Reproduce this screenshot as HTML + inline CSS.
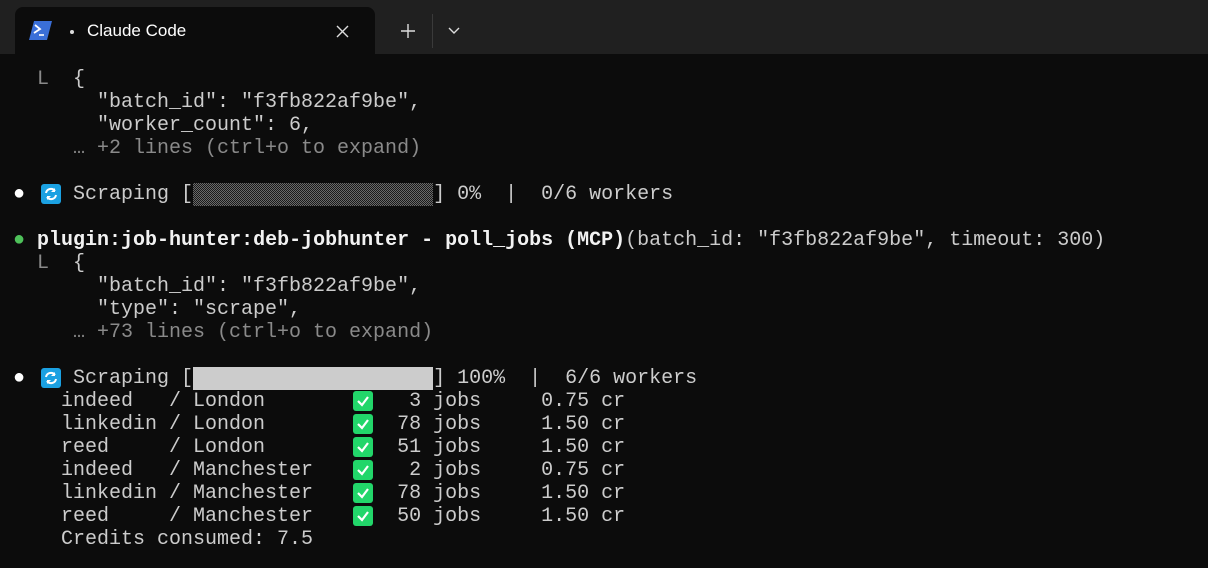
<!DOCTYPE html>
<html><head><meta charset="utf-8"><style>
*{margin:0;padding:0;box-sizing:border-box}
body{width:1208px;height:568px;background:#0c0c0c;overflow:hidden;position:relative;font-family:"Liberation Mono",monospace;font-size:20px;color:#cccccc}
.bar{position:absolute;left:0;top:0;width:1208px;height:54px;background:#202020}
.tab{position:absolute;left:15px;top:7px;width:360px;height:47px;background:#0c0c0c;border-radius:8px 8px 0 0}
.tt{position:absolute;left:87px;top:21px;font-family:"Liberation Sans",sans-serif;font-size:17px;color:#fff}
.l{position:absolute;left:13px;height:23px;line-height:23px;white-space:pre}
.d{color:#8a8a8a}
.b{color:#f2f2f2;font-weight:bold}
.ic{display:inline-block;width:24px;height:23px;vertical-align:top;position:relative}
.ic svg{position:absolute;left:4px;top:1px}
.g{display:inline-block;width:240px;height:23px;vertical-align:top}
.g0{background-image:repeating-conic-gradient(#6a6a6a 0 25%,#1a1a1a 0 50%);background-size:2px 2px}
.g1{background:#cccccc}
</style></head><body>
<div class="bar"></div>
<div class="tab"></div>
<svg style="position:absolute;left:29px;top:21px" width="23" height="19" viewBox="0 0 23 19"><path d="M5 0H23L18 19H0Z" fill="#3a6fd8"/><path d="M6 4L11 8L5 12" stroke="#fff" stroke-width="1.8" fill="none"/><path d="M10 14H15" stroke="#fff" stroke-width="1.6"/></svg>
<div style="position:absolute;left:70px;top:30px;width:4px;height:4px;border-radius:2px;background:#ddd"></div>
<div class="tt">Claude Code</div>
<svg style="position:absolute;left:336px;top:25px" width="13" height="13"><path d="M1 1L12 12M12 1L1 12" stroke="#ddd" stroke-width="1.4"/></svg>
<svg style="position:absolute;left:401px;top:24px" width="14" height="14"><path d="M7 0V14M0 7H14" stroke="#ddd" stroke-width="1.4"/></svg>
<div style="position:absolute;left:432px;top:14px;width:1px;height:34px;background:#3a3a3a"></div>
<svg style="position:absolute;left:448px;top:27px" width="12" height="8"><path d="M1 1L6 6L11 1" stroke="#ddd" stroke-width="1.4" fill="none"/></svg>

<div class="l" style="top:68px">  <span class="d">L</span>  {</div>
<div class="l" style="top:91px">       "batch_id": "f3fb822af9be",</div>
<div class="l" style="top:114px">       "worker_count": 6,</div>
<div class="l d" style="top:137px">     … +2 lines (ctrl+o to expand)</div>
<div class="l" style="top:183px"><span style="color:#fff">●</span> <span class="ic"><svg width="20" height="20" viewBox="0 0 20 20"><rect width="20" height="20" rx="3" fill="#1ba1e2"/><path d="M5 9A5 5 0 0 1 14 7M15 11A5 5 0 0 1 6 13" stroke="#fff" stroke-width="2" fill="none"/><path d="M14 4V8H10Z M6 16V12H10Z" fill="#fff"/></svg></span> Scraping [<span class="g g0"></span>] 0%  |  0/6 workers</div>
<div class="l" style="top:229px"><span style="color:#4ec15a">●</span> <span class="b">plugin:job-hunter:deb-jobhunter - poll_jobs (MCP)</span>(batch_id: "f3fb822af9be", timeout: 300)</div>
<div class="l" style="top:252px">  <span class="d">L</span>  {</div>
<div class="l" style="top:275px">       "batch_id": "f3fb822af9be",</div>
<div class="l" style="top:298px">       "type": "scrape",</div>
<div class="l d" style="top:321px">     … +73 lines (ctrl+o to expand)</div>
<div class="l" style="top:367px"><span style="color:#fff">●</span> <span class="ic"><svg width="20" height="20" viewBox="0 0 20 20"><rect width="20" height="20" rx="3" fill="#1ba1e2"/><path d="M5 9A5 5 0 0 1 14 7M15 11A5 5 0 0 1 6 13" stroke="#fff" stroke-width="2" fill="none"/><path d="M14 4V8H10Z M6 16V12H10Z" fill="#fff"/></svg></span> Scraping [<span class="g g1"></span>] 100%  |  6/6 workers</div>
<div class="l" style="top:390px">    indeed   / London       <span class="ic"><svg width="20" height="20"><rect width="20" height="20" rx="3" fill="#22d66a"/><path d="M5 10L9 14L15 6" stroke="#fff" stroke-width="2.2" fill="none"/></svg></span>   3 jobs     0.75 cr</div>
<div class="l" style="top:413px">    linkedin / London       <span class="ic"><svg width="20" height="20"><rect width="20" height="20" rx="3" fill="#22d66a"/><path d="M5 10L9 14L15 6" stroke="#fff" stroke-width="2.2" fill="none"/></svg></span>  78 jobs     1.50 cr</div>
<div class="l" style="top:436px">    reed     / London       <span class="ic"><svg width="20" height="20"><rect width="20" height="20" rx="3" fill="#22d66a"/><path d="M5 10L9 14L15 6" stroke="#fff" stroke-width="2.2" fill="none"/></svg></span>  51 jobs     1.50 cr</div>
<div class="l" style="top:459px">    indeed   / Manchester   <span class="ic"><svg width="20" height="20"><rect width="20" height="20" rx="3" fill="#22d66a"/><path d="M5 10L9 14L15 6" stroke="#fff" stroke-width="2.2" fill="none"/></svg></span>   2 jobs     0.75 cr</div>
<div class="l" style="top:482px">    linkedin / Manchester   <span class="ic"><svg width="20" height="20"><rect width="20" height="20" rx="3" fill="#22d66a"/><path d="M5 10L9 14L15 6" stroke="#fff" stroke-width="2.2" fill="none"/></svg></span>  78 jobs     1.50 cr</div>
<div class="l" style="top:505px">    reed     / Manchester   <span class="ic"><svg width="20" height="20"><rect width="20" height="20" rx="3" fill="#22d66a"/><path d="M5 10L9 14L15 6" stroke="#fff" stroke-width="2.2" fill="none"/></svg></span>  50 jobs     1.50 cr</div>
<div class="l" style="top:528px">    Credits consumed: 7.5</div>
</body></html>
